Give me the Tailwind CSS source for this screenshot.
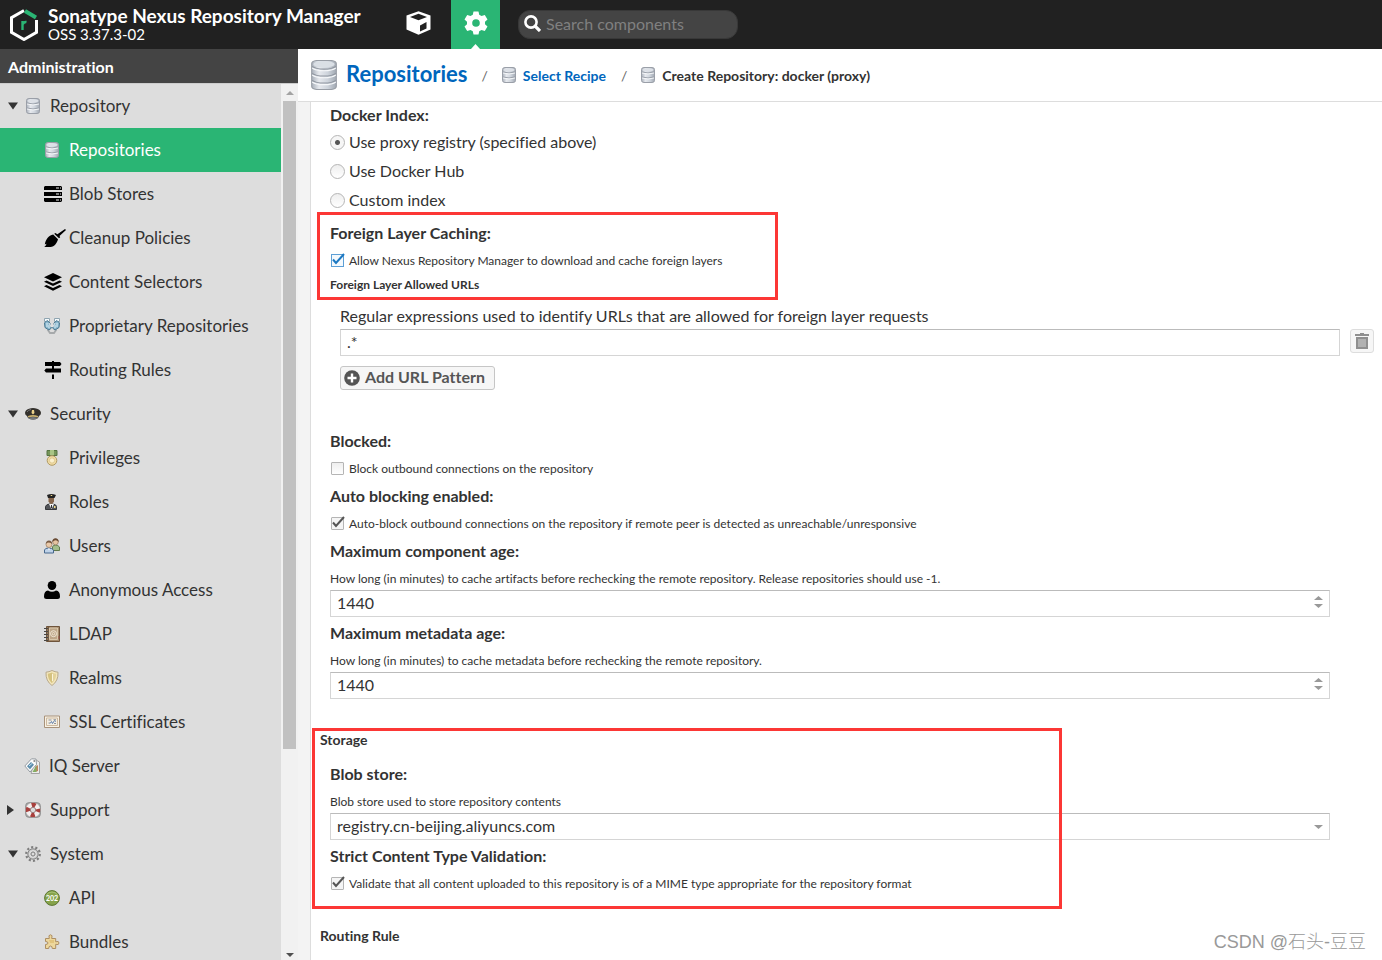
<!DOCTYPE html>
<html lang="en">
<head>
<meta charset="utf-8">
<title>Sonatype Nexus Repository Manager</title>
<script src="https://cdn.jsdelivr.net/npm/@tailwindcss/browser@4"></script>
</head>
<body class="relative flex h-screen flex-col overflow-hidden bg-white font-['Lato','Noto_Sans_CJK_SC',sans-serif] text-[16px] text-[#333] [font-variant-ligatures:none]">

<svg class="absolute h-0 w-0" aria-hidden="true">
  <defs>
    <linearGradient id="metal" x1="0" x2="1" y1="0" y2="0">
      <stop offset="0" stop-color="#a9b0ba"/><stop offset=".3" stop-color="#e6e9ee"/><stop offset=".65" stop-color="#ced4dc"/><stop offset="1" stop-color="#a2a9b3"/>
    </linearGradient>
    <symbol id="database" viewBox="0 0 24 28">
      <path d="M1 24v2q11 4 22 0v-2z" fill="#8d9299"/>
      <path d="M.5 3.500Q.5 1 5 .5h14q4.500.500 4.500 3v21q0 2.500-4.500 3H5q-4.500-.5-4.500-3z" fill="url(#metal)" stroke="#989da5"/>
      <ellipse cx="12" cy="4" rx="10" ry="3" fill="#dadfe5"/>
      <path d="M1 6q3 2.500 11 2.500T23 6M1 12.500q3 2.500 11 2.500t11-2.500M1 19q3 2.500 11 2.500T23 19" fill="none" stroke="#9096a0" stroke-width="1"/>
      <path d="M1 7.500q3 2.500 11 2.500t11-2.500M1 14q3 2.500 11 2.500T23 14M1 20.500Q4 23 12 23t11-2.500" fill="none" stroke="#f5f7f9" stroke-width="1"/>
    </symbol>
    <symbol id="database-small" viewBox="0 0 14 16">
      <path d="M.5 2.500Q.5.5 3 .5h8q2.500 0 2.500 2v11q0 2-2.500 2H3q-2.500 0-2.500-2z" fill="url(#metal)" stroke="#9a9fa8"/>
      <ellipse cx="7" cy="2.800" rx="5.500" ry="1.600" fill="#dde1e7"/>
      <path d="M1 5q6 2 12 0M1 10q6 2 12 0" fill="none" stroke="#989ea8"/>
      <path d="M1 6q6 2 12 0M1 11q6 2 12 0" fill="none" stroke="#f5f7f9"/>
    </symbol>
    <symbol id="tri-down" viewBox="0 0 10 8"><path d="M0 .5h10L5 7.500z"/></symbol>
  </defs>
</svg>

<header class="flex h-[49px] shrink-0 items-center bg-[#212121] text-white">
  <div class="flex w-[402px] items-center gap-2 pl-2">
    <svg class="h-8 w-8 shrink-0" viewBox="0 0 32 32" fill="none">
      <path d="M16 1.500 3.500 8.700v14.600L16 30.500l12.500-7.200V8.700" stroke="#fff" stroke-width="3"/>
      <path d="M28.500 13V8.700L17 2" stroke="#212121" stroke-width="5"/>
      <path d="M28.500 11v12.500" stroke="#fff" stroke-width="3"/>
      <path d="m17 2 11 6.500" stroke="#2ab574" stroke-width="4"/>
      <path d="M14.500 21v-9m0 3.500q1.500-3 4-2.500" stroke="#2ab574" stroke-width="2.400"/>
    </svg>
    <div class="pb-0.5">
      <h1 class="text-[19px] leading-5 font-bold whitespace-nowrap">Sonatype Nexus Repository Manager</h1>
      <p class="text-[15px] leading-4">OSS 3.37.3-02</p>
    </div>
  </div>
  <button class="flex h-full w-[49px] items-center pb-1 pl-1" aria-label="Browse">
    <svg class="h-6 w-[25px]" viewBox="0 0 25 24">
      <path d="M12.500.3 24.500 4.500v14l-12 5.300-12-5.300v-14z" fill="#fff"/>
      <path d="m4 6 8.500-3.200L21 6l-8.500 3.200z" fill="#212121"/>
      <path d="M14 14.500 20.500 11v6.500L14 20.500z" fill="#212121"/>
    </svg>
  </button>
  <button class="relative flex h-full w-[49px] items-center justify-center bg-[#2ab574] pb-1" aria-label="Administration">
    <svg class="h-6 w-6" viewBox="0 0 24 24"><path fill="#fff" fill-rule="evenodd" d="M9.500.5h5l.7 3.300 2.300 1.300 3.300-1.100 2.700 4.400L21 10.700v2.600l2.500 2.300-2.700 4.400-3.300-1.100-2.300 1.300-.7 3.300h-5l-.7-3.300-2.300-1.300L3.200 20 .5 15.600 3 13.300v-2.600L.5 8.400 3.200 4l3.300 1.100 2.300-1.300zM12 8.200a3.800 3.800 0 1 0 0 7.600 3.800 3.800 0 0 0 0-7.600z"/></svg>
    <svg class="absolute bottom-0 left-5 h-[5px] w-[9px]" viewBox="0 0 9 5"><path d="M0 5 4.500 0 9 5z" fill="#fff"/></svg>
  </button>
  <label class="ml-[18px] flex h-[29px] w-[220px] items-center rounded-xl border border-[#383838] bg-[#444] pb-0.5 pl-[5px]">
    <svg class="h-[17px] w-[17px] shrink-0" viewBox="0 0 17 17" fill="none" stroke="#fff"><circle cx="7" cy="7" r="5.600" stroke-width="2.600"/><path d="m11 11 5 5" stroke-width="3.200"/></svg>
    <input class="ml-[5px] w-full min-w-0 bg-transparent text-[16px] outline-none placeholder:text-[#808080]" type="search" placeholder="Search components" aria-label="Search components">
  </label>
</header>

<div class="flex min-h-0 flex-1">
  <aside class="flex w-[298px] shrink-0 flex-col">
    <h2 class="h-[35px] shrink-0 border-b border-[#ccc] bg-[#444] pl-2 text-[16px] leading-[35px] font-bold text-white">Administration</h2>
    <div class="flex min-h-0 flex-1 overflow-hidden">
      <nav class="flex min-w-0 flex-1 flex-col bg-[#ddd] text-[17px]" aria-label="Administration">
        <a href="#" class="flex h-11 shrink-0 items-center pl-2"><svg class="h-2 w-[10px] fill-[#333]"><use href="#tri-down"/></svg><svg class="ml-2 h-4 w-[14px]"><use href="#database-small"/></svg><span class="ml-[10px]">Repository</span></a>
        <a href="#" class="flex h-11 shrink-0 items-center bg-[#2ab574] pl-[45px] text-white"><span class="flex w-6"><svg class="h-4 w-[14px]"><use href="#database-small"/></svg></span>Repositories</a>
        <a href="#" class="flex h-11 shrink-0 items-center pl-11"><span class="flex w-[25px]"><svg class="h-4 w-[18px]" viewBox="0 0 18 16"><path d="M1 0h16l1 1v3H0V1zM0 6h18v4H0zM0 12h18v3l-1 1H1l-1-1z"/><path d="M12 1.500h3v1h-3zm4 0h1v1h-1zM12 7.500h3v1h-3zm4 0h1v1h-1zM12 13.500h3v1h-3zm4 0h1v1h-1z" fill="#eee"/></svg></span>Blob Stores</a>
        <a href="#" class="flex h-11 shrink-0 items-center pl-11"><span class="flex w-[25px]"><svg class="h-[18px] w-[22px] shrink-0" viewBox="0 0 22 18"><path d="M21 0 22 1 15.500 7l.7 1.200-1.200 1-4.800-4.400L11.400 4l2 1.200zM9.200 5.600l4.800 4.600c-1 4-3.500 7.300-7.500 7.800H.2c1.400-.7 2-2 2.200-3.200l-1.600.7C1.600 11 4.500 6.400 9.200 5.600z"/></svg></span>Cleanup Policies</a>
        <a href="#" class="flex h-11 shrink-0 items-center pl-11"><span class="flex w-[25px]"><svg class="h-[18px] w-[18px]" viewBox="0 0 18 18"><path d="m9 0 9 4.300-9 4.300-9-4.300zM2.500 7.400 9 10.500l6.500-3.100L18 8.800l-9 4.300-9-4.300zM2.500 11.900 9 15l6.500-3.100 2.500 1.400L9 17.800l-9-4.500z"/></svg></span>Content Selectors</a>
        <a href="#" class="flex h-11 shrink-0 items-center pl-11"><span class="flex w-[25px]"><svg class="h-4 w-4" viewBox="0 0 16 16"><path d="M3.500 11.500 6 15h4l2.500-3.500" fill="#ddd" stroke="#a6a9ab" stroke-width="1.800"/><path d="M.5.500h5v3h-5zM10.500.500h5v3h-5z" fill="#f5fafc" stroke="#8fa5b1"/><path d="M.5 5 3 2.500 6 5v3l1.500 2L5 12 1 9.500zM15.500 5 13 2.500 10 5v3l-1.500 2L11 12l4-2.500z" fill="#8db9cf" stroke="#47768f"/><path d="M3 5v4M5 7v3M13 5v4m-2-2v3" stroke="#d9edf5"/><path d="m5 5 2 4m4-4L9 9" stroke="#fff" stroke-width=".8"/></svg></span>Proprietary Repositories</a>
        <a href="#" class="flex h-11 shrink-0 items-center pl-11"><span class="flex w-[25px]"><svg class="h-[18px] w-[18px]" viewBox="0 0 18 18"><path d="M8 0h2v1h6l1.500 2L16 5H1V1h7zM8 5h2v2.500h7v4H2L.3 9.500 2 7.500h6zM8 13.500h2V18H8z"/></svg></span>Routing Rules</a>
        <a href="#" class="flex h-11 shrink-0 items-center pl-2"><svg class="h-2 w-[10px] fill-[#333]"><use href="#tri-down"/></svg><svg class="ml-[7px] h-3 w-4" viewBox="0 0 16 12"><path d="M0 5q0-3 4-4.300Q8-.5 12 .7q4 1.300 4 4.300 0 2-2 3l-1 2q-5 3-10 0L2 8Q0 7 0 5z" fill="#33302c"/><path d="M3 8q5-2 10 0v1.500q-5-1.700-10 0z" fill="#c9b06d"/><path d="M3 10q5-2 10 0-5 3.500-10 0z" fill="#74787c"/><path d="M7 2h2l.5 3L8 6.500 6.500 5z" fill="#ecd28a"/><path d="M2 4q1-2 4-2.500" fill="none" stroke="#777"/></svg><span class="ml-[9px]">Security</span></a>
        <a href="#" class="flex h-11 shrink-0 items-center pl-11"><span class="flex w-[25px]"><svg class="h-4 w-4" viewBox="0 0 16 16"><path d="M3 .5h10v5H3z" fill="#76965a" stroke="#557342"/><path d="M6 0h4v5H6z" fill="#a9c585"/><circle cx="8" cy="10.500" r="4.800" fill="#f0dba4" stroke="#b09a63"/><circle cx="8" cy="10.500" r="2.600" fill="#fbf0cd" stroke="#d6bd80" stroke-width=".7"/></svg></span>Privileges</a>
        <a href="#" class="flex h-11 shrink-0 items-center pl-11"><span class="flex w-[25px]"><svg class="h-4 w-4" viewBox="0 0 16 16"><path d="M1.500 15.500v-3q.5-2 4-2.500h3q4 .5 4 2.500v3z" fill="#53555a" stroke="#35373a"/><path d="M5 10h5l-2.500 5z" fill="#f4f4f4"/><path d="M4.500 3h5.500v4.500q-2.700 5-5.500 0z" fill="#86664c"/><path d="M3 1q4.500-2 9 0l-1.500 3H4z" fill="#222"/><path d="M6.700 1h1.500v1H6.700zM10 12h1.500v2H10z" fill="#f2dd8a"/><path d="M7 11h1v3H7z" fill="#333"/></svg></span>Roles</a>
        <a href="#" class="flex h-11 shrink-0 items-center pl-11"><span class="flex w-[25px]"><svg class="h-4 w-4" viewBox="0 0 16 16"><path d="M8.500 12.500V9q.5-2 3-2t4 2v3.500z" fill="#a2bd8a" stroke="#617a4c"/><circle cx="11.500" cy="4" r="2.800" fill="#e5c4a1" stroke="#8a6a4c" stroke-width=".6"/><path d="M8.200 4Q8.500.3 11.500.3T14.800 4q-1.500-1.500-3-1.700T8.200 4z" fill="#694b34"/><path d="M.5 15v-3q.5-2 4-2t5 2v3z" fill="#bed2e8" stroke="#48698e"/><path d="m4 10.500 1 2 1-2z" fill="#fff"/><circle cx="5" cy="6.500" r="3" fill="#eac9a8" stroke="#8a6a4c" stroke-width=".6"/><path d="M1.700 6Q2 2.500 5 2.500T8.300 6Q7 4.800 5 4.600T1.700 6z" fill="#795b43"/></svg></span>Users</a>
        <a href="#" class="flex h-11 shrink-0 items-center pl-11"><span class="flex w-[25px]"><svg class="h-[18px] w-4" viewBox="0 0 16 18"><ellipse cx="8" cy="4.500" rx="4.300" ry="4.500"/><path d="M4 9.500q4 2.500 8 0 4 .5 4 6 0 2.500-2.500 2.500h-11Q0 18 0 15.500q0-5.500 4-6z"/></svg></span>Anonymous Access</a>
        <a href="#" class="flex h-11 shrink-0 items-center pl-11"><span class="flex w-[25px]"><svg class="h-4 w-4" viewBox="0 0 16 16"><path d="M2.500.5h13v15h-13z" fill="#a58a6b" stroke="#6e543b"/><path d="M5.500 2h8v11.500h-8z" fill="#bda587" stroke="#e2d2b8" stroke-width=".8"/><path d="M4.200 1v14" stroke="#5f4630"/><path d="M0 2.500h4m-4 3h4m-4 3h4m-4 3h4m-4 3h4" stroke="#4a4744"/><circle cx="9.500" cy="7.700" r="3" fill="none" stroke="#f5ecdc" stroke-width=".9"/><circle cx="9.500" cy="7.700" r="1.200" fill="none" stroke="#f5ecdc" stroke-width=".8"/><path d="M15 10v3" stroke="#96504a"/></svg></span>LDAP</a>
        <a href="#" class="flex h-11 shrink-0 items-center pl-11"><span class="flex w-[25px]"><svg class="h-4 w-4" viewBox="0 0 16 16"><path d="M8 .5q3 1.500 6 1.700.5 8.800-6 13.300Q1.500 11 2 2.200 5 2 8 .5z" fill="#f4e7bd" stroke="#b8a98a"/><path d="M8 2.500v10.800Q3.700 9.500 3.800 3.800 6 3.500 8 2.500z" fill="#d5c280"/><path d="M8 2.500v10.800q4.300-3.800 4.200-9.500Q10 3.500 8 2.500z" fill="#e3d29a"/><path d="M8.500 4v7" stroke="#fbf4dc"/></svg></span>Realms</a>
        <a href="#" class="flex h-11 shrink-0 items-center pl-11"><span class="flex w-[25px]"><svg class="h-[14px] w-4" viewBox="0 0 16 14"><path d="M.5 1h15v11.500H.5z" fill="#f8f2e6" stroke="#a8927a"/><path d="M2.500 3h11v7.500h-11z" fill="#f4eee2" stroke="#cdb99f"/><path d="M4.500 5h3M10 8.500h2M4.500 8h1.500" stroke="#8f9399"/><path d="m6 8.500 1.500-2 1 2 2-3 1.500 1" fill="none" stroke="#5e7fae"/><path d="M9.500 4.700H12" stroke="#8f9399"/></svg></span>SSL Certificates</a>
        <a href="#" class="flex h-11 shrink-0 items-center pl-6"><span class="flex w-[25px]"><svg class="h-4 w-4" viewBox="0 0 16 16"><path d="M11 1.500 15.500 4v11.500H7z" fill="#ececec" stroke="#a3a3a3"/><path d="m11 9 3-2v6l-3 1z" fill="#c5825a"/><path d="m8.500 14 4-7v7z" fill="#83ad63"/><path d="M.8 8 7.500.8 12 1l.5 5.500L6 14z" fill="#fafafa" stroke="#939aa0"/><path d="M3 8.200 7 4l3 2.800-4 4.500z" fill="#5b8cab"/><path d="m5 8 3-2.500" stroke="#c4e2f0"/><circle cx="10.300" cy="3" r="1" fill="#888"/></svg></span>IQ Server</a>
        <a href="#" class="flex h-11 shrink-0 items-center pl-[7px]"><svg class="h-[10px] w-[7px] fill-[#333]" viewBox="0 0 7 10"><path d="M0 0v10l7-5z"/></svg><svg class="ml-[11px] h-4 w-4" viewBox="0 0 16 16"><rect x=".7" y=".7" width="14.600" height="14.600" rx="3" fill="#aaa" stroke="#8d8d8d"/><circle cx="8" cy="8" r="5" fill="none" stroke="#f3eeee" stroke-width="4.500"/><circle cx="8" cy="8" r="5" fill="none" stroke="#a83f3c" stroke-width="4.500" stroke-dasharray="3.930 3.930" stroke-dashoffset="1.960"/><circle cx="8" cy="8" r="2.700" fill="#ddd" stroke="#8a6060" stroke-width=".7"/></svg><span class="ml-[9px]">Support</span></a>
        <a href="#" class="flex h-11 shrink-0 items-center pl-2"><svg class="h-2 w-[10px] fill-[#333]"><use href="#tri-down"/></svg><svg class="ml-[7px] h-4 w-4" viewBox="0 0 16 16" fill="none"><circle cx="8" cy="8" r="6.800" stroke="#7e7e7e" stroke-width="2.200" stroke-dasharray="2.136 2.136"/><circle cx="8" cy="8" r="5.200" fill="#c9c9c9" stroke="#868686"/><circle cx="8" cy="8" r="3.300" stroke="#e6e6e6"/><circle cx="8" cy="8" r="2" fill="#ddd" stroke="#808080"/></svg><span class="ml-[9px]">System</span></a>
        <a href="#" class="flex h-11 shrink-0 items-center pl-11"><span class="flex w-[25px]"><svg class="h-4 w-4" viewBox="0 0 16 16"><circle cx="8" cy="8" r="7.400" fill="#86a34b" stroke="#5b7530"/><path d="M2 6q1.500-4 6-4t6 4" fill="none" stroke="#a9c274"/><text x="8" y="10.500" text-anchor="middle" font-size="7" font-weight="bold" fill="#fff">202</text></svg></span>API</a>
        <a href="#" class="flex h-11 shrink-0 items-center pl-11"><span class="flex w-[25px]"><svg class="h-4 w-4" viewBox="0 0 16 16"><path d="M1.500 4.500h3.800Q4 .8 6.500.8T7.700 4.500h4v3.300q3.300-1.300 3.300 1.200t-3.300 1.300v4.200H8.300q0-2.500-1.800-2.500T4.700 14.500H1.500v-4q2.500 0 2.500-1.500T1.500 7.500z" fill="#edd79c" stroke="#ad8e63"/><path d="M5 6h5v3H6z" fill="#e2c47d"/></svg></span>Bundles</a>
      </nav>
      <div class="flex w-[17px] shrink-0 flex-col items-center justify-between bg-[#f1f1f1]" aria-hidden="true">
        <svg class="mt-[7px] h-1 w-2 shrink-0" viewBox="0 0 8 4"><path d="M0 4 4 0l4 4z" fill="#a3a3a3"/></svg>
        <div class="flex min-h-0 flex-1 flex-col self-stretch px-[2px] pt-[6px] pb-[10px]"><div class="h-[77%] bg-[#c1c1c1]"></div></div>
        <svg class="mb-[3px] h-1 w-2 shrink-0" viewBox="0 0 8 4"><path d="m0 0 4 4 4-4z" fill="#505050"/></svg>
      </div>
    </div>
  </aside>

  <main class="flex min-w-0 flex-1 flex-col">
    <nav class="flex h-[53px] shrink-0 items-center border-b border-[#ddd] pl-[13px] text-[14px] font-bold" aria-label="Breadcrumb">
      <svg class="h-[30px] w-[26px]"><use href="#database"/></svg>
      <a href="#" class="ml-[9px] pb-1 text-[22px] text-[#0066bd]">Repositories</a>
      <span class="ml-[14px] font-normal text-[#666]">/</span>
      <svg class="ml-[14px] h-4 w-[14px]"><use href="#database-small"/></svg>
      <a href="#" class="ml-[7px] text-[#0066bd]">Select Recipe</a>
      <span class="ml-[15px] font-normal text-[#666]">/</span>
      <svg class="ml-[14px] h-4 w-[14px]"><use href="#database-small"/></svg>
      <span class="ml-[7px]">Create Repository: docker (proxy)</span>
    </nav>

    <div class="relative flex min-h-0 flex-1 overflow-hidden">
      <div class="w-[13px] shrink-0 border-r border-[#ddd] bg-[#f3f3f3]"></div>
      <form class="min-w-0 flex-1">
        <fieldset class="pl-[19px]">
          <legend class="h-[26px] text-[16px] leading-[26px] font-bold">Docker Index:</legend>
          <label class="flex h-[29px] items-center gap-1"><input type="radio" name="idx" checked class="h-[15px] w-[15px] appearance-none rounded-full border border-[#b5b5b5] bg-[radial-gradient(circle,#555_2px,#f6f6f6_3px)]"><span class="pb-0.5">Use proxy registry (specified above)</span></label>
          <label class="flex h-[29px] items-center gap-1"><input type="radio" name="idx" class="h-[15px] w-[15px] appearance-none rounded-full border border-[#b5b5b5] bg-linear-to-b from-[#eee] to-white"><span class="pb-0.5">Use Docker Hub</span></label>
          <label class="flex h-[29px] items-center gap-1"><input type="radio" name="idx" class="h-[15px] w-[15px] appearance-none rounded-full border border-[#b5b5b5] bg-linear-to-b from-[#eee] to-white"><span class="pb-0.5">Custom index</span></label>
        </fieldset>

        <section class="relative mt-1 ml-[19px]">
          <h3 class="h-[30px] text-[16px] leading-7 font-bold">Foreign Layer Caching:</h3>
          <label class="flex h-[23px] items-center gap-1 text-[12px]">
            <span class="relative flex w-[15px] pl-px"><input type="checkbox" checked class="h-[13px] w-[13px] appearance-none border border-[#5c9fd6] bg-[#f4f9fd]"><svg class="absolute -top-px left-0 h-[14px] w-[15px]" viewBox="0 0 15 14" fill="none"><path d="m3 6.500 3 3.500L14 1" stroke="#1b78c2" stroke-width="2"/></svg></span>
            Allow Nexus Repository Manager to download and cache foreign layers</label>
          <h4 class="mt-0.5 h-[22px] text-[12px] leading-[22px] font-bold">Foreign Layer Allowed URLs</h4>
          <div class="pointer-events-none absolute -top-[7px] -left-[13px] h-[88px] w-[461px] border-3 border-[#fc3735]"></div>
        </section>

        <section class="mt-[9px] mr-2 ml-[29px]">
          <label for="pattern" class="block h-6 leading-[22px]">Regular expressions used to identify URLs that are allowed for foreign layer requests</label>
          <div class="flex items-start gap-[10px]">
            <input id="pattern" type="text" value=".*" class="h-[27px] min-w-0 flex-1 border border-[#d5d5d5] border-t-[#bbb] px-[6px] pb-0.5">
            <button type="button" class="flex h-6 w-6 items-center justify-center rounded-[3px] border border-[#ddd] bg-[#f6f6f6]" aria-label="Delete">
              <svg class="h-4 w-[14px]" viewBox="0 0 14 16"><path d="M5 0h4v1h5v2H0V1h5zM1 4h12v12H1z" fill="#8f8f8f"/><path d="M4 6v8m2-8v8m2-8v8m2-8v8" stroke="#c8c8c8" stroke-width="1.200"/></svg>
            </button>
          </div>
          <button type="button" class="mt-[10px] flex h-6 w-[155px] items-center gap-[5px] rounded-[3px] border border-[#c6c6c6] bg-[#f6f6f6] pl-[3px] text-[16px] font-bold whitespace-nowrap text-[#555]">
            <svg class="h-4 w-4 shrink-0" viewBox="0 0 16 16"><circle cx="8" cy="8" r="7.800" fill="#555"/><path d="M8 3.500v9M3.500 8h9" stroke="#fff" stroke-width="2.400"/></svg>
            <span class="pb-0.5">Add URL Pattern</span></button>
        </section>

        <section class="mt-[37px] mr-[52px] ml-[19px] flex flex-col gap-0.5">
          <div>
            <h3 class="h-[30px] text-[16px] leading-7 font-bold">Blocked:</h3>
            <label class="flex h-[23px] items-center gap-1 text-[12px]"><span class="flex w-[15px] pl-px"><input type="checkbox" class="h-[13px] w-[13px] appearance-none rounded-[1px] border border-[#b5b5b5] bg-linear-to-b from-[#eee] to-white"></span>Block outbound connections on the repository</label>
          </div>
          <div>
            <h3 class="h-[30px] text-[16px] leading-7 font-bold">Auto blocking enabled:</h3>
            <label class="flex h-[23px] items-center gap-1 text-[12px]"><span class="relative flex w-[15px] pl-px"><input type="checkbox" checked class="h-[13px] w-[13px] appearance-none rounded-[1px] border border-[#b5b5b5] bg-[#f5f5f5]"><svg class="absolute -top-px left-0 h-[14px] w-[15px]" viewBox="0 0 15 14" fill="none"><path d="m3 6.500 3 3.500L14 1" stroke="#555" stroke-width="2"/></svg></span>Auto-block outbound connections on the repository if remote peer is detected as unreachable/unresponsive</label>
          </div>
          <div>
            <label for="cage" class="block h-[30px] text-[16px] leading-7 font-bold">Maximum component age:</label>
            <p class="h-[23px] text-[12px] leading-[23px]">How long (in minutes) to cache artifacts before rechecking the remote repository. Release repositories should use -1.</p>
            <div class="relative">
              <input id="cage" type="number" value="1440" class="block h-[27px] w-full [appearance:textfield] border border-[#d5d5d5] border-t-[#bbb] px-[6px] pb-0.5">
              <svg class="absolute top-[6px] right-[7px] h-3 w-[9px]" viewBox="0 0 9 12"><path d="M0 4 4.500 0 9 4zM0 8h9l-4.500 4z" fill="#999"/></svg>
            </div>
          </div>
          <div>
            <label for="mage" class="block h-[30px] text-[16px] leading-7 font-bold">Maximum metadata age:</label>
            <p class="h-[23px] text-[12px] leading-[23px]">How long (in minutes) to cache metadata before rechecking the remote repository.</p>
            <div class="relative">
              <input id="mage" type="number" value="1440" class="block h-[27px] w-full [appearance:textfield] border border-[#d5d5d5] border-t-[#bbb] px-[6px] pb-0.5">
              <svg class="absolute top-[6px] right-[7px] h-3 w-[9px]" viewBox="0 0 9 12"><path d="M0 4 4.500 0 9 4zM0 8h9l-4.500 4z" fill="#999"/></svg>
            </div>
          </div>
        </section>

        <section class="relative mt-[30px] ml-[9px]">
          <h2 class="h-6 text-[14px] leading-[22px] font-bold">Storage</h2>
          <div class="mt-[7px] mr-[52px] ml-[10px] flex flex-col gap-0.5">
            <div>
              <label for="blob" class="block h-[30px] text-[16px] leading-7 font-bold">Blob store:</label>
              <p class="h-[23px] text-[12px] leading-[23px]">Blob store used to store repository contents</p>
              <div class="relative">
                <select id="blob" class="block h-[27px] w-full appearance-none border border-[#d5d5d5] border-t-[#bbb] bg-white px-[6px] pb-0.5"><option>registry.cn-beijing.aliyuncs.com</option></select>
                <svg class="pointer-events-none absolute top-3 right-[7px] h-1 w-[9px]" viewBox="0 0 9 4"><path d="M0 0h9L4.500 4z" fill="#999"/></svg>
              </div>
            </div>
            <div>
              <h3 class="h-[30px] text-[16px] leading-7 font-bold">Strict Content Type Validation:</h3>
              <label class="flex h-[23px] items-center gap-1 text-[12px]"><span class="relative flex w-[15px] pl-px"><input type="checkbox" checked class="h-[13px] w-[13px] appearance-none rounded-[1px] border border-[#b5b5b5] bg-[#f5f5f5]"><svg class="absolute -top-px left-0 h-[14px] w-[15px]" viewBox="0 0 15 14" fill="none"><path d="m3 6.500 3 3.500L14 1" stroke="#555" stroke-width="2"/></svg></span>Validate that all content uploaded to this repository is of a MIME type appropriate for the repository format</label>
            </div>
          </div>
          <div class="pointer-events-none absolute -top-px -left-2 h-[181px] w-[750px] border-3 border-[#fc3735]"></div>
        </section>

        <h2 class="mt-[30px] ml-[9px] h-6 text-[14px] leading-[22px] font-bold">Routing Rule</h2>
      </form>
      <p class="absolute right-4 bottom-[6px] font-['Liberation_Sans','Noto_Sans_CJK_SC',sans-serif] text-[18px] leading-6 font-light text-[#999]">CSDN @石头-豆豆</p>
    </div>
  </main>
</div>
</body>
</html>
